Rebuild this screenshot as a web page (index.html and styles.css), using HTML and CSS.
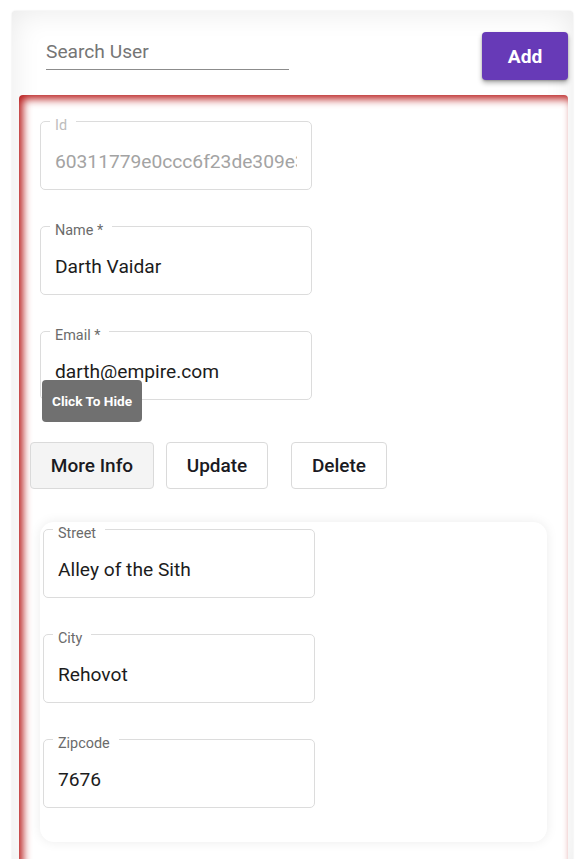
FILE: index.html
```html
<!DOCTYPE html>
<html lang="en">
<head>
<meta charset="utf-8">
<title>Users</title>
<link rel="stylesheet" href="styles.css">
</head>
<body>
<div class="panel">
  <div class="header">
    <div class="search">Search User</div>
    <button class="add-btn">Add</button>
  </div>
  <div class="user-card">
    <div class="fields">
      <div class="field disabled"><span class="label">Id</span><div class="value">60311779e0ccc6f23de309e3</div></div>
      <div class="field"><span class="label">Name *</span><div class="value">Darth Vaidar</div></div>
      <div class="field"><span class="label">Email *</span><div class="value">darth@empire.com</div></div>
    </div>
    <div class="actions">
      <div class="tooltip">Click To Hide</div>
      <button class="btn btn-more">More Info</button>
      <button class="btn btn-update">Update</button>
      <button class="btn btn-delete">Delete</button>
    </div>
    <div class="address-card">
      <div class="field"><span class="label">Street</span><div class="value">Alley of the Sith</div></div>
      <div class="field"><span class="label">City</span><div class="value">Rehovot</div></div>
      <div class="field"><span class="label">Zipcode</span><div class="value">7676</div></div>
    </div>
  </div>
</div>
</body>
</html>
```
FILE: styles.css
```css
* { box-sizing: border-box; }

html, body {
  margin: 0;
  padding: 0;
  background: #ffffff;
  font-family: Roboto, "Liberation Sans", Arial, sans-serif;
}

.panel {
  margin: 11px 3px 0 12px;
  padding: 0 5px 0 7px;
  background: #ffffff;
  box-shadow: inset 0 0 30px rgba(0, 0, 0, 0.09), 0 0 2px rgba(0, 0, 0, 0.12);
  border-radius: 4px 4px 0 0;
}

.header {
  display: flex;
  justify-content: space-between;
  align-items: flex-start;
  padding: 21px 0 15px 27px;
}

.search {
  margin-top: 4px;
  width: 243px;
  padding: 4px 0 6px;
  font-size: 19.2px;
  line-height: 23px;
  color: #757575;
  border-bottom: 1px solid #8c8c8c;
}

.add-btn {
  width: 86px;
  height: 48px;
  border: none;
  border-radius: 4px;
  background: #673ab7;
  color: #ffffff;
  font-family: Roboto, "Liberation Sans", Arial, sans-serif;
  font-size: 19.2px;
  font-weight: 700;
  box-shadow: 0 3px 5px rgba(0, 0, 0, 0.3), 0 1px 2px rgba(0, 0, 0, 0.2);
}

.user-card {
  background: #ffffff;
  border-radius: 4px 4px 0 0;
  box-shadow: inset 4px 4px 9px rgba(185, 30, 30, 1);
  padding: 26px 0 30px 11px;
}

.fields {
  display: flex;
  flex-direction: column;
  gap: 36px;
  padding-left: 10px;
}

.field {
  position: relative;
  width: 272px;
  height: 69px;
  border: 1px solid #dcdcdc;
  border-radius: 5px;
  padding: 28px 14px 0;
}

.label {
  position: absolute;
  top: -5px;
  left: 9px;
  padding: 0 9px 0 5px;
  background: #ffffff;
  font-size: 14.4px;
  line-height: 17px;
  color: #6b6b6b;
  white-space: nowrap;
}

.value {
  font-size: 19.2px;
  line-height: 23px;
  color: #1c1c1c;
  white-space: nowrap;
  overflow: hidden;
}

.field.disabled .label { color: #bdbdbd; }
.field.disabled .value { color: #a3a3a3; }

.actions {
  position: relative;
  display: flex;
  margin-top: 42px;
}

.btn {
  height: 47px;
  padding: 0;
  border: 1px solid #dadada;
  border-radius: 4px;
  background: #ffffff;
  color: #1a1a22;
  font-family: Roboto, "Liberation Sans", Arial, sans-serif;
  font-size: 19px;
  font-weight: 500;
  line-height: 23px;
  white-space: nowrap;
}

.btn-more {
  width: 124px;
  background: #f4f4f4;
  margin-right: 12px;
}

.btn-update {
  width: 102px;
  margin-right: 23px;
}

.btn-delete {
  width: 96px;
}

.tooltip {
  position: absolute;
  left: 12px;
  top: -62px;
  width: 100px;
  height: 42px;
  border-radius: 4px;
  background: #707070;
  color: #ffffff;
  font-size: 13.6px;
  font-weight: 700;
  display: flex;
  align-items: center;
  justify-content: center;
  z-index: 2;
}

.address-card {
  margin: 33px 0 0 10px;
  width: 507px;
  padding: 7px 3px 34px;
  background: #ffffff;
  border-radius: 14px;
  box-shadow: 0 0 12px rgba(0, 0, 0, 0.08);
  display: flex;
  flex-direction: column;
  gap: 36px;
}
```
